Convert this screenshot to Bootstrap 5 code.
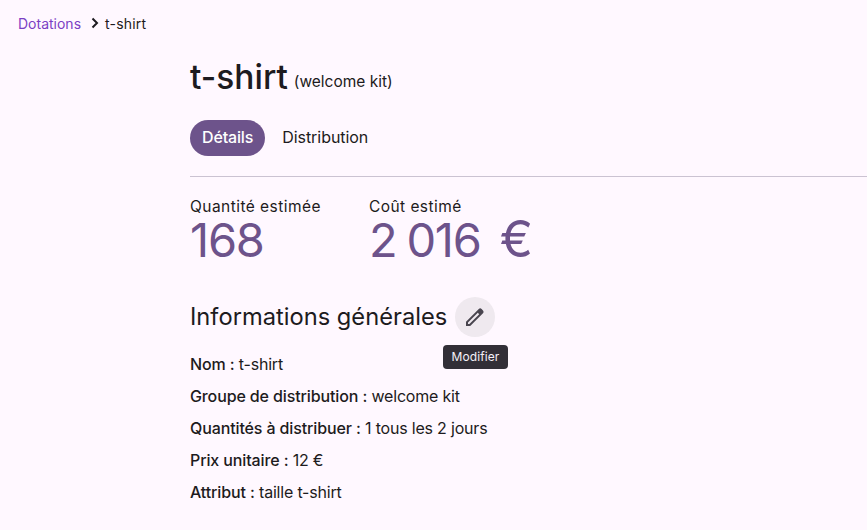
<!DOCTYPE html>
<html lang="fr"><head><meta charset="utf-8"><title>t-shirt</title>
<link href="https://cdn.jsdelivr.net/npm/bootstrap@5.3.0/dist/css/bootstrap.min.css" rel="stylesheet">
<style>
html,body{height:530px;overflow:hidden}
body{background:#fff8ff;color:#1d1b20;font-family:Inter,"Liberation Sans",sans-serif;font-size:16px}
.crumbs{padding:14px 18px 0;font-size:14px;line-height:17px;height:32px}
.crumbs a{color:#7b3fc4;text-decoration:none}
.crumbs svg{margin:0 6px 0 10px}
.crumbs span{letter-spacing:.2px}
.sheet{margin-left:190px}
.ttl{font-size:33.5px;line-height:40px;font-weight:500;margin:0;padding-top:25px;height:65px}
.ttl small{font-size:15.5px;font-weight:400;margin-left:-3px;vertical-align:2px}
.tabsrow{margin-top:23px;gap:5px;height:36px}
.tabsrow a{color:#1d1b20;text-decoration:none;padding:0 12px;line-height:35px;border-radius:18px;letter-spacing:-.05px}
.tabsrow a.on{background:#6d538b;color:#fff;font-weight:500;padding:0 12px;letter-spacing:-.15px}
.rule{height:1px;background:#cbc3d2;margin-top:20px}
.stats{margin-top:21px;gap:48px}
.lab{font-size:15.5px;line-height:17px;letter-spacing:.45px}
.val{font-size:47px;line-height:50px;color:#6d538b;letter-spacing:-1.2px;word-spacing:-2px}
.val span{margin-left:9px;font-size:50px;line-height:40px}
.subh{margin-top:32px;gap:8px;height:40px}
.subh h2{font-size:23.7px;font-weight:400;margin:0}
.pen{width:40px;height:40px;border-radius:50%;background:#efe9ef;border:0;padding:0}
.facts{margin-top:11px}
.facts p{margin:0;line-height:32px;height:32px;letter-spacing:-.2px}
.facts b{font-weight:450;letter-spacing:-.12px}
.tip{position:absolute;left:443px;top:345px;width:65px;height:24px;background:#322f37;color:#f5eff7;border-radius:4px;font-size:12px;line-height:24px;text-align:center;letter-spacing:.1px}
</style></head><body>
<nav class="crumbs d-flex align-items-center"><a href="#">Dotations</a><svg width="8" height="12" viewBox="0 0 8 12"><path d="M1.5 1.5 6 6l-4.5 4.5" fill="none" stroke="#1d1b20" stroke-width="2"/></svg><span>t-shirt</span></nav>
<main class="sheet">
<h1 class="ttl">t-shirt <small>(welcome kit)</small></h1>
<div class="tabsrow d-flex"><a class="on" href="#">Détails</a><a href="#">Distribution</a></div>
<div class="rule"></div>
<div class="stats d-flex">
<div><div class="lab">Quantité estimée</div><div class="val">168</div></div>
<div><div class="lab">Coût estimé</div><div class="val">2 016 <span>€</span></div></div>
</div>
<div class="subh d-flex align-items-center"><h2>Informations générales</h2>
<button class="pen d-flex align-items-center justify-content-center" aria-label="Modifier"><svg width="24" height="24" viewBox="0 0 24 24"><path d="M3 21v-4.2L15.8 4a2 2 0 0 1 2.8 0l1.4 1.4a2 2 0 0 1 0 2.8L7.2 21ZM5 19h1.4L16.2 9.2l-1.4-1.4L5 17.6Z" fill="#49454f"/></svg></button></div>
<div class="facts">
<p><b>Nom :</b> t-shirt</p>
<p><b>Groupe de distribution :</b> welcome kit</p>
<p><b>Quantités à distribuer :</b> 1 tous les 2 jours</p>
<p><b>Prix unitaire :</b> 12 €</p>
<p><b>Attribut :</b> taille t-shirt</p>
</div>
</main>
<div class="tip">Modifier</div>
<script src="https://cdn.jsdelivr.net/npm/bootstrap@5.3.0/dist/js/bootstrap.bundle.min.js"></script>
</body></html>
